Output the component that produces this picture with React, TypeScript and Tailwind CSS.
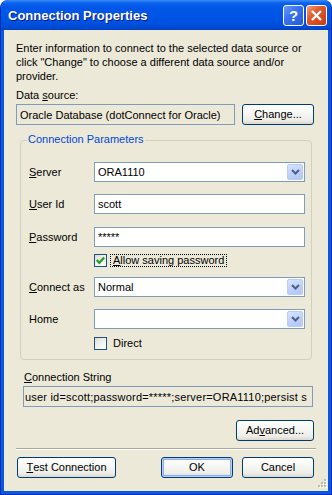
import React from "react";

function U({ children }: { children: React.ReactNode }) {
  return <span className="underline underline-offset-[1px]">{children}</span>;
}

function XPButton({
  children,
  w,
  isDefault,
}: {
  children: React.ReactNode;
  w: string;
  isDefault?: boolean;
}) {
  return (
    <div
      className={
        "h-[21px] rounded-[3px] border border-[#003C74] bg-[linear-gradient(180deg,#FFFFFF_0%,#F6F6F3_45%,#EEEDE8_80%,#DCD7CB_100%)] flex items-center justify-center text-[11px] text-black shrink-0 " +
        w +
        (isDefault ? " shadow-[inset_0_0_0_1px_#B9D1FA,inset_0_0_0_2px_#8AAEEB]" : "")
      }
    >
      {children}
    </div>
  );
}

function Chevron() {
  return (
    <svg width="9" height="6" viewBox="0 0 9 6">
      <polyline points="1,1 4.5,4.5 8,1" fill="none" stroke="#4D6185" strokeWidth="2" />
    </svg>
  );
}

function Combo({ value }: { value: string }) {
  return (
    <div className="w-[211px] h-[20px] border border-[#7F9DB9] bg-white flex items-center pl-[3px] pr-[1px]">
      <span className="flex-1 leading-[14px]">{value}</span>
      <div className="w-[16px] h-[16px] rounded-[2px] border border-[#B9CDF8] bg-[linear-gradient(160deg,#D7E2FD_0%,#C1D3FB_50%,#B0C5F6_100%)] flex items-center justify-center">
        <Chevron />
      </div>
    </div>
  );
}

function TextBox({ value }: { value: string }) {
  return (
    <div className="w-[211px] h-[20px] border border-[#7F9DB9] bg-white flex items-center pl-[3px] leading-[14px]">
      {value}
    </div>
  );
}

function CheckBox({ checked }: { checked?: boolean }) {
  return (
    <div className="w-[13px] h-[13px] border border-[#1C5180] bg-[linear-gradient(135deg,#DCDCD7_0%,#F0F0EC_50%,#FFFFFF_100%)] flex items-center justify-center shrink-0">
      {checked && (
        <svg width="11" height="11" viewBox="0 0 11 11">
          <polyline points="1.8,5 4.3,7.8 9.2,2.5" fill="none" stroke="#21A121" strokeWidth="2.2" />
        </svg>
      )}
    </div>
  );
}

function Row({ label, children }: { label: React.ReactNode; children: React.ReactNode }) {
  return (
    <div className="flex items-center h-[20px]">
      <div className="w-[65px] leading-[14px]">{label}</div>
      {children}
    </div>
  );
}

export default function App() {
  return (
    <div className="w-[332px] h-[495px] flex flex-col rounded-t-[8px] bg-[#0A57E2] border-x border-b border-[#0030B8] font-['Liberation_Sans',Arial,sans-serif] overflow-hidden">
      {/* Title bar */}
      <div className="h-[30px] shrink-0 -mx-[1px] rounded-t-[8px] flex items-center pl-[8px] pr-[5px] bg-[linear-gradient(180deg,#3C8DF8_0%,#0A62EE_10%,#0357E8_25%,#0055E6_50%,#0052E0_75%,#0049D2_92%,#0040C0_100%)]">
        <span className="text-white font-bold text-[13px] leading-[16px] mt-[2px] [text-shadow:1px_1px_0_#0A1A8A]">
          Connection Properties
        </span>
        <div className="ml-auto flex gap-[2px] mt-[1px]">
          <div className="w-[21px] h-[21px] rounded-[3px] border border-white bg-[linear-gradient(135deg,#6B9DF8_0%,#3B73EE_40%,#2359DC_100%)] flex items-center justify-center">
            <span className="text-white font-bold text-[15px] leading-[15px]">?</span>
          </div>
          <div className="w-[21px] h-[21px] rounded-[3px] border border-white bg-[linear-gradient(135deg,#F0A080_0%,#E1582C_40%,#C73D12_100%)] flex items-center justify-center">
            <svg width="19" height="19" viewBox="0 0 19 19">
              <line x1="5" y1="5" x2="14" y2="14" stroke="white" strokeWidth="2.4" />
              <line x1="14" y1="5" x2="5" y2="14" stroke="white" strokeWidth="2.4" />
            </svg>
          </div>
        </div>
      </div>

      {/* Client area */}
      <div className="flex-1 mx-[3px] mb-[3px] bg-[#ECE9D8] relative flex flex-col text-[11px] text-black">
        <div className="mt-[11px] ml-[12px] leading-[14px]">
          <div>Enter information to connect to the selected data source or</div>
          <div>click "Change" to choose a different data source and/or</div>
          <div>provider.</div>
        </div>

        <div className="mt-[5px] ml-[12px] leading-[14px]">
          Data <U>s</U>ource:
        </div>

        <div className="mt-[2px] ml-[12px] flex">
          <div className="w-[219px] h-[21px] border border-[#7F9DB9] flex items-center pl-[3px] leading-[14px]">
            Oracle Database (dotConnect for Oracle)
          </div>
          <div className="ml-[7px]">
            <XPButton w="w-[72px]">
              <U>C</U>hange...
            </XPButton>
          </div>
        </div>

        {/* Group box */}
        <div className="mt-[15px] ml-[16px] w-[292px] relative border border-[#D0D0BF] rounded-[4px] pt-[21px] pb-[9px] pl-[8px]">
          <div className="absolute left-[6px] top-[-9px] px-[1px] bg-[#ECE9D8] text-[#0046D5] leading-[14px]">
            Connection Parameters
          </div>
          <Row
            label={
              <>
                <U>S</U>erver
              </>
            }
          >
            <Combo value="ORA1110" />
          </Row>
          <div className="mt-[12px]">
            <Row
              label={
                <>
                  <U>U</U>ser Id
                </>
              }
            >
              <TextBox value="scott" />
            </Row>
          </div>
          <div className="mt-[13px]">
            <Row
              label={
                <>
                  <U>P</U>assword
                </>
              }
            >
              <TextBox value="*****" />
            </Row>
          </div>
          <div className="mt-[7px] ml-[65px] flex items-center h-[13px]">
            <CheckBox checked />
            <span className="ml-[3px] border border-dotted border-black px-[2px] h-[13px] leading-[11px]">
              <U>A</U>llow saving password
            </span>
          </div>
          <div className="mt-[10px]">
            <Row
              label={
                <>
                  <U>C</U>onnect as
                </>
              }
            >
              <Combo value="Normal" />
            </Row>
          </div>
          <div className="mt-[12px]">
            <Row label="Home">
              <Combo value="" />
            </Row>
          </div>
          <div className="mt-[8px] ml-[65px] flex items-center h-[13px]">
            <CheckBox />
            <span className="ml-[6px] leading-[13px]">Direct</span>
          </div>
        </div>

        <div className="mt-[10px] ml-[20px] leading-[14px]">
          <U>C</U>onnection String
        </div>
        <div className="mt-[2px] ml-[19px] w-[290px] h-[21px] border border-[#7F9DB9] flex items-center pl-[1px] overflow-hidden whitespace-nowrap leading-[14px] tracking-[0.2px]">
          user id=scott;password=*****;server=ORA1110;persist s
        </div>

        <div className="mt-[13px] ml-[232px]">
          <XPButton w="w-[78px]">
            Ad<U>v</U>anced...
          </XPButton>
        </div>

        <div className="mt-[7px] ml-[12px] w-[300px] border-t border-t-[#ACA899] border-b border-b-white" />

        <div className="mt-[7px] ml-[13px] flex">
          <XPButton w="w-[99px]">
            <U>T</U>est Connection
          </XPButton>
          <div className="ml-[45px]">
            <XPButton w="w-[72px]" isDefault>
              OK
            </XPButton>
          </div>
          <div className="ml-[9px]">
            <XPButton w="w-[72px]">Cancel</XPButton>
          </div>
        </div>

        {/* Resize grip */}
        <div className="absolute right-[1px] bottom-[1px]">
          <svg width="12" height="12" viewBox="0 0 12 12">
            {[
              [9, 1],
              [6, 4],
              [9, 4],
              [3, 7],
              [6, 7],
              [9, 7],
            ].map(([x, y], i) => (
              <g key={i}>
                <rect x={x + 1} y={y + 1} width="2" height="2" fill="#FFFFFF" />
                <rect x={x} y={y} width="2" height="2" fill="#C1BDAA" />
              </g>
            ))}
          </svg>
        </div>
      </div>
    </div>
  );
}
